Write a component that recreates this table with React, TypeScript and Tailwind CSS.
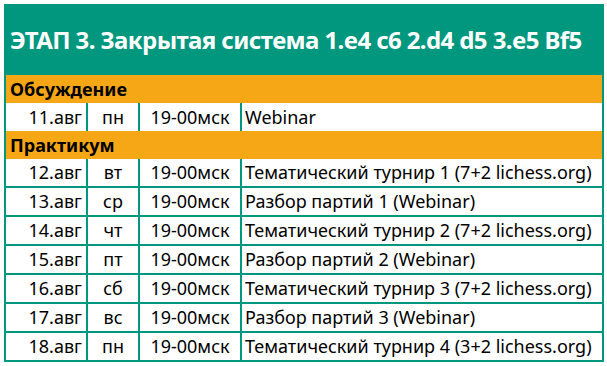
import React from "react";

type Row = { date: string; day: string; time: string; title: string };

const discussion: Row[] = [
  { date: "11.авг", day: "пн", time: "19-00мск", title: "Webinar" },
];

const practice: Row[] = [
  { date: "12.авг", day: "вт", time: "19-00мск", title: "Тематический турнир 1 (7+2 lichess.org)" },
  { date: "13.авг", day: "ср", time: "19-00мск", title: "Разбор партий 1 (Webinar)" },
  { date: "14.авг", day: "чт", time: "19-00мск", title: "Тематический турнир 2 (7+2 lichess.org)" },
  { date: "15.авг", day: "пт", time: "19-00мск", title: "Разбор партий 2 (Webinar)" },
  { date: "16.авг", day: "сб", time: "19-00мск", title: "Тематический турнир 3 (7+2 lichess.org)" },
  { date: "17.авг", day: "вс", time: "19-00мск", title: "Разбор партий 3 (Webinar)" },
  { date: "18.авг", day: "пн", time: "19-00мск", title: "Тематический турнир 4 (3+2 lichess.org)" },
];

const SectionRow = ({ label }: { label: string }) => (
  <div className="h-[28px] bg-[#f5a716] flex items-center pl-[4px] font-bold text-[18px] text-black">
    {label}
  </div>
);

const Cells = ({ row }: { row: Row }) => (
  <>
    <div className="w-[82px] border-r-2 border-[#00977f] flex items-center justify-end pr-[4px]">
      {row.date}
    </div>
    <div className="w-[52px] border-r-2 border-[#00977f] flex items-center justify-center">
      {row.day}
    </div>
    <div className="w-[102px] border-r-2 border-[#00977f] flex items-center justify-center">
      {row.time}
    </div>
    <div className="flex-1 flex items-center pl-[3px] whitespace-nowrap">{row.title}</div>
  </>
);

const DataRow = ({ row, last }: { row: Row; last?: boolean }) => (
  <div
    className={`flex text-[18px] text-black ${
      last ? "h-[27px]" : "h-[29px] border-b-2 border-[#00977f]"
    }`}
  >
    <Cells row={row} />
  </div>
);

export default function App() {
  return (
    <div
      className="bg-white w-[607px] h-[366px] pt-1 pl-1"
      style={{ fontFamily: '"Noto Sans", "Open Sans", sans-serif' }}
    >
      <div className="w-[600px]">
        <div className="h-[71px] bg-[#00977f] flex items-center pl-[6px] text-white font-bold text-[24px] tracking-[-0.6px] whitespace-nowrap">
          ЭТАП 3. Закрытая система 1.e4 c6 2.d4 d5 3.e5 Bf5
        </div>
        <div className="border-x-2 border-b-2 border-[#00977f]">
          <SectionRow label="Обсуждение" />
          <div className="flex h-[28px] text-[18px] text-black">
            <Cells row={discussion[0]} />
          </div>
          <SectionRow label="Практикум" />
          {practice.map((r, i) => (
            <DataRow key={r.date} row={r} last={i === practice.length - 1} />
          ))}
        </div>
      </div>
    </div>
  );
}
